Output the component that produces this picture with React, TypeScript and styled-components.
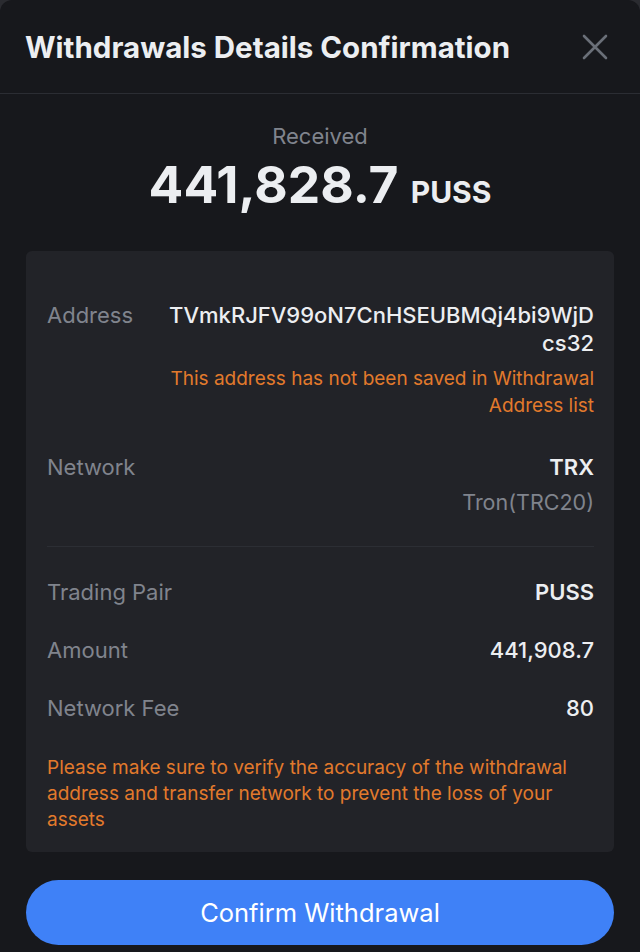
import styled, { createGlobalStyle } from 'styled-components';

const GlobalStyle = createGlobalStyle`
  html, body {
    margin: 0;
    padding: 0;
    background: #2a2b30;
  }
  body {
    font-family: Inter, "Noto Sans", sans-serif;
    -webkit-font-smoothing: antialiased;
  }
`;

const colors = {
  sheet: '#17181c',
  card: '#222328',
  line: '#2b2d33',
  text: '#eceef1',
  muted: '#80848d',
  warn: '#e27a2c',
  blue: '#3f81f7',
};

type Detail = { label: string; value: string; bold?: boolean };

const details: Detail[] = [
  { label: 'Trading Pair', value: 'PUSS', bold: true },
  { label: 'Amount', value: '441,908.7' },
  { label: 'Network Fee', value: '80' },
];

const CloseIcon = () => (
  <svg width='26' height='26' viewBox='0 0 26 26' fill='none'>
    <path
      d='M2 2L24 24M24 2L2 24'
      stroke='#6a6f78'
      strokeWidth='2.6'
      strokeLinecap='round'
    />
  </svg>
);

const App = () => {
  return (
    <>
      <GlobalStyle />
      <Sheet>
        <Header>
          <Title>Withdrawals Details Confirmation</Title>
          <CloseButton aria-label='close'>
            <CloseIcon />
          </CloseButton>
        </Header>
        <Body>
          <Summary>
            <Received>Received</Received>
            <Total>
              441,828.7 <Unit>PUSS</Unit>
            </Total>
          </Summary>
          <Card>
            <Row>
              <Label>Address</Label>
              <RightCol>
                <Address>TVmkRJFV99oN7CnHSEUBMQj4bi9WjDcs32</Address>
                <Warn>This address has not been saved in Withdrawal Address list</Warn>
              </RightCol>
            </Row>
            <Row $top={34}>
              <Label>Network</Label>
              <RightCol>
                <Value $bold>TRX</Value>
                <SubValue>Tron(TRC20)</SubValue>
              </RightCol>
            </Row>
            <Divider />
            {details.map((d, i) => (
              <Row key={d.label} $top={i === 0 ? 31 : 30}>
                <Label>{d.label}</Label>
                <Value $bold={d.bold}>{d.value}</Value>
              </Row>
            ))}
            <Note>
              Please make sure to verify the accuracy of the withdrawal address and
              transfer network to prevent the loss of your assets
            </Note>
          </Card>
          <ConfirmButton>Confirm Withdrawal</ConfirmButton>
        </Body>
      </Sheet>
    </>
  );
};

export default App;

const Sheet = styled.div`
  width: 640px;
  height: 952px;
  background: ${colors.sheet};
  border-radius: 12px 12px 0 0;
  overflow: hidden;
  display: flex;
  flex-direction: column;
`;

const Header = styled.div`
  height: 94px;
  padding: 0 32px 0 25px;
  display: flex;
  align-items: center;
  justify-content: space-between;
  border-bottom: 1.5px solid ${colors.line};
  box-sizing: border-box;
`;

const Title = styled.h1`
  margin: 0;
  font-size: 29.5px;
  font-weight: 700;
  color: ${colors.text};
`;

const CloseButton = styled.button`
  background: none;
  border: none;
  padding: 0;
  display: flex;
  cursor: pointer;
`;

const Body = styled.div`
  padding: 0 26px;
  display: flex;
  flex-direction: column;
`;

const Summary = styled.div`
  display: flex;
  flex-direction: column;
  align-items: center;
  padding-top: 28px;
  height: 157px;
  box-sizing: border-box;
`;

const Received = styled.div`
  font-size: 22px;
  line-height: 28px;
  color: ${colors.muted};
`;

const Total = styled.div`
  margin-top: 4px;
  font-size: 51.5px;
  font-weight: 700;
  line-height: 60px;
  color: ${colors.text};
`;

const Unit = styled.span`
  font-size: 30px;
`;

const Card = styled.div`
  background: ${colors.card};
  border-radius: 6px;
  padding: 50px 20px 19px 21px;
  height: 601px;
  box-sizing: border-box;
`;

const Row = styled.div<{ $top?: number }>`
  display: flex;
  justify-content: space-between;
  align-items: flex-start;
  gap: 36px;
  margin-top: ${(p) => p.$top ?? 0}px;
`;

const Label = styled.div`
  font-size: 22px;
  line-height: 28px;
  color: ${colors.muted};
  white-space: nowrap;
`;

const RightCol = styled.div`
  display: flex;
  flex-direction: column;
  align-items: flex-end;
  text-align: right;
  max-width: 426px;
`;

const Value = styled.div<{ $bold?: boolean }>`
  font-size: 22px;
  line-height: 28px;
  font-weight: ${(p) => (p.$bold ? 600 : 500)};
  color: ${colors.text};
`;

const Address = styled(Value)`
  word-break: break-all;
`;

const SubValue = styled.div`
  margin-top: 7px;
  font-size: 21.5px;
  line-height: 28px;
  color: ${colors.muted};
`;

const Warn = styled.div`
  margin-top: 8px;
  font-size: 19px;
  line-height: 27px;
  color: ${colors.warn};
`;

const Divider = styled.div`
  height: 1px;
  background: #2c2e34;
  margin-top: 30px;
`;

const Note = styled.p`
  margin: 33px 0 0;
  font-size: 19px;
  line-height: 26px;
  color: ${colors.warn};
`;

const ConfirmButton = styled.button`
  margin-top: 28px;
  height: 65px;
  width: 100%;
  border: none;
  border-radius: 33px;
  background: ${colors.blue};
  color: #fff;
  font-family: inherit;
  font-size: 25.5px;
  cursor: pointer;
`;
